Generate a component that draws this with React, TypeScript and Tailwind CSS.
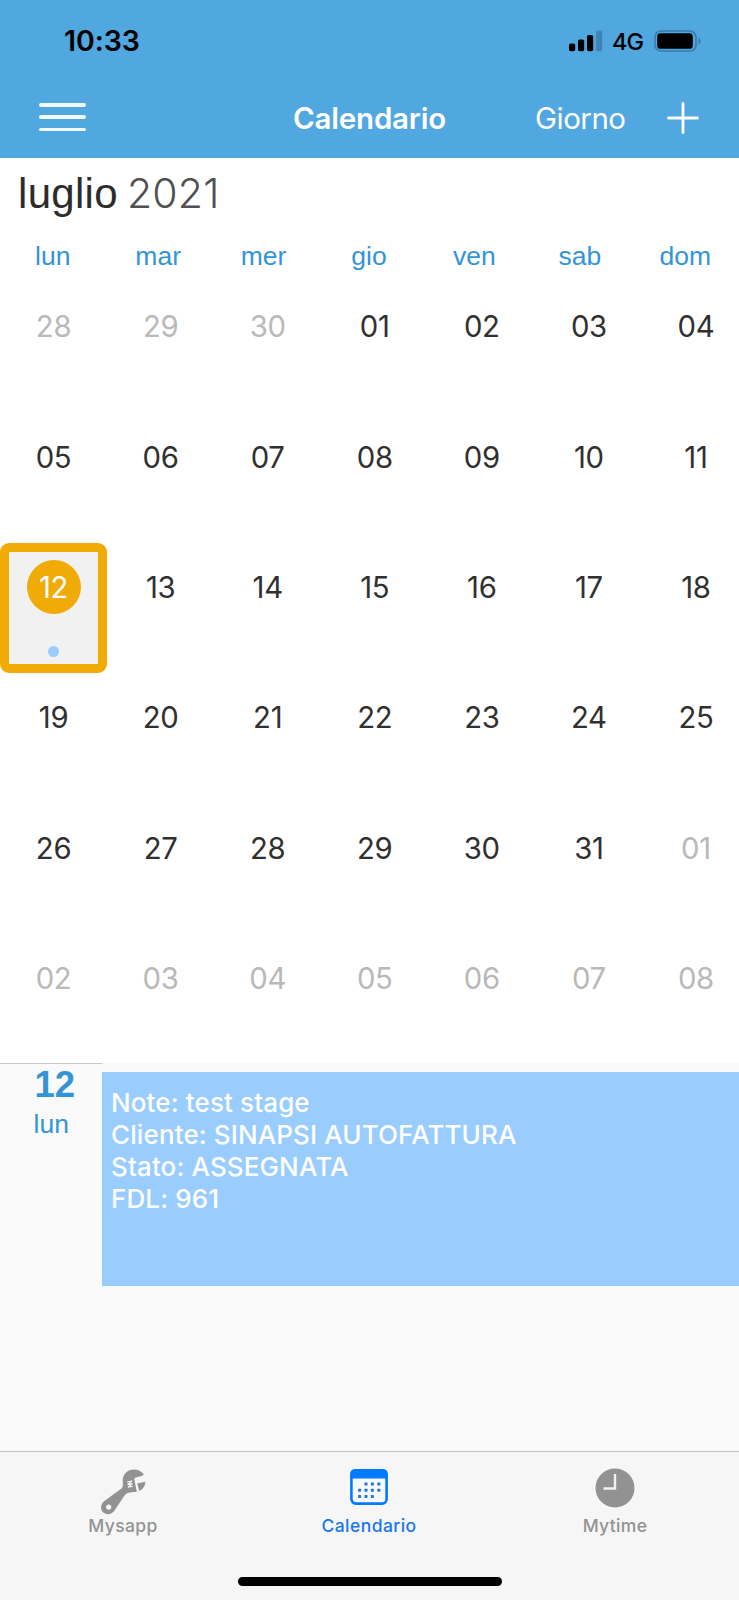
import React from "react";

const weekdays = ["lun", "mar", "mer", "gio", "ven", "sab", "dom"];

const weeks = [
  ["28", "29", "30", "01", "02", "03", "04"],
  ["05", "06", "07", "08", "09", "10", "11"],
  ["12", "13", "14", "15", "16", "17", "18"],
  ["19", "20", "21", "22", "23", "24", "25"],
  ["26", "27", "28", "29", "30", "31", "01"],
  ["02", "03", "04", "05", "06", "07", "08"],
];

const isOutside = (row: number, col: number) =>
  (row === 0 && col < 3) || (row === 4 && col === 6) || row === 5;

function StatusBar() {
  return (
    <div className="flex h-[82px] items-center justify-between pr-[37px] pl-[64px] text-black">
      <span className="text-[28.5px] leading-none font-semibold tracking-[-0.1px]">10:33</span>
      <div className="flex items-center">
        <svg width="34" height="22" viewBox="0 0 34 22">
          <rect x="0" y="13.5" width="6.2" height="7.7" rx="1.8" />
          <rect x="9" y="9.5" width="6.2" height="11.7" rx="1.8" />
          <rect x="18" y="5" width="6.2" height="16.2" rx="1.8" />
          <rect x="27" y="0.5" width="6.2" height="20.7" rx="1.8" fill="#3d84b5" />
        </svg>
        <span className="ml-[9px] w-[32px] pt-px text-[23.5px] leading-none font-medium tracking-[-0.8px]">4G</span>
        <svg className="ml-[10px]" width="48" height="22" viewBox="0 0 48 22">
          <rect x="1" y="1" width="41" height="20" rx="6" fill="none" stroke="#3a7ba8" strokeWidth="1.6" />
          <rect x="3.2" y="3.2" width="35.6" height="15.6" rx="3.4" />
          <path d="M44.5 7.4c2.6 1 2.6 6.2 0 7.2z" fill="#3a7ba8" />
        </svg>
      </div>
    </div>
  );
}

function NavBar() {
  return (
    <div className="grid h-[75.5px] grid-cols-[293px_242px_1fr] items-start text-[29.5px] leading-none text-white">
      <div className="flex flex-col gap-[8.5px] pt-[21px] pl-[39px]">
        <i className="h-[3.8px] w-[47px] rounded-full bg-[#f1faff]" />
        <i className="h-[3.8px] w-[47px] rounded-full bg-[#f1faff]" />
        <i className="h-[3.8px] w-[47px] rounded-full bg-[#f1faff]" />
      </div>
      <span className="pt-[22px] font-semibold tracking-[-0.2px]">Calendario</span>
      <div className="flex items-start">
        <span className="w-[132px] pt-[22px] tracking-[-0.5px]">Giorno</span>
        <svg className="mt-[20px]" width="32" height="32" viewBox="0 0 32 32">
          <path d="M1.5 16H30.5M16 1.5V30.5" stroke="#fff" strokeWidth="2.8" strokeLinecap="round" />
        </svg>
      </div>
    </div>
  );
}

function DayCell({ day, outside, selected }: { day: string; outside: boolean; selected: boolean }) {
  if (selected) {
    return (
      <div className="flex h-[130px] w-[107px] flex-col items-center rounded-[9px] border-[9px] border-[#f0ab06] bg-[#f1f1f1] pt-[8px]">
        <span className="flex size-[54px] items-center justify-center rounded-full bg-[#f0ab06] pt-px text-white">{day}</span>
        <i className="mt-[32px] size-[11px] rounded-full bg-[#99ccff]" />
      </div>
    );
  }
  return (
    <div className={outside ? "flex justify-center pt-[17px] text-[#b9b9b9]" : "flex justify-center pt-[17px] text-[#303030]"}>
      <span className="flex h-[54px] items-center pt-px">{day}</span>
    </div>
  );
}

function WrenchIcon() {
  return (
    <svg width="46" height="48" viewBox="0 0 46 48">
      <path
        fill="#929292"
        fillRule="evenodd"
        d="M42.8 5.3C39.5 .8 34 -.4 29.3 1.1C24 3 21.6 7.5 21.7 12C21.8 15 22.5 17.5 20.5 19.5L3 32.2C-.8 35.5-.8 41 2.5 43.6C6.5 46.6 11.5 45.2 13.8 41L23.5 26.5C26.5 22.6 31 23.6 35.8 22.8L33.2 9.8C36 6.8 40 9 42.8 5.3ZM7.7 35.5A2.600 2.600 0 1 1 7.700 40.700A2.600 2.600 0 1 1 7.700 35.500Z"
      />
      <path fill="#929292" d="M36.2 14.5L44.3 12.7C44.3 16.5 42 20.3 38.3 22Z" />
      <path
        d="M26 13L31 12M26.5 15.6L31.5 14.6M27 18.2L32 17.2M31 12L26.5 15.6M31.5 14.6L27 18.2"
        stroke="#f3f3f3"
        strokeWidth="1.1"
      />
    </svg>
  );
}

function CalendarIcon() {
  const dots = [
    [16, 15], [22.4, 15], [28.8, 15],
    [9.6, 21.2], [16, 21.2], [22.4, 21.2], [28.8, 21.2],
    [9.6, 27.4], [16, 27.4], [22.4, 27.4],
  ];
  return (
    <svg width="38" height="36" viewBox="0 0 38 36">
      <rect x="1.4" y="1.4" width="35.2" height="33.2" rx="4.5" fill="#f7f9fc" stroke="#007aff" strokeWidth="2.6" />
      <path d="M.2 9.4V5Q.2 .2 5 .2H33Q37.8 .2 37.8 5V9.4Z" fill="#007aff" />
      {dots.map(([x, y]) => (
        <rect key={x + "-" + y} x={x - 1.5} y={y - 1.5} width="3" height="3" rx=".6" fill="#2474d6" />
      ))}
    </svg>
  );
}

function ClockIcon() {
  return (
    <svg width="40" height="40" viewBox="0 0 40 40">
      <circle cx="20" cy="20" r="19.5" fill="#929292" />
      <path d="M20 6V20.5H8.5" fill="none" stroke="#f2f2f2" strokeWidth="2.4" />
    </svg>
  );
}

function TabBar() {
  return (
    <nav className="h-[149px] border-t border-[#bfc3c3] bg-[#f6f6f6]">
      <div className="grid h-[125px] w-[738px] grid-cols-3 text-[17.5px] leading-none font-medium text-[#929292]">
        <div className="flex flex-col items-center">
          <div className="h-[65px] pt-[17px] pl-px"><WrenchIcon /></div>
          <span className="tracking-[0.35px]">Mysapp</span>
        </div>
        <div className="flex flex-col items-center text-[#1677ee]">
          <div className="h-[65px] pt-[17px]"><CalendarIcon /></div>
          <span className="tracking-[0.45px]">Calendario</span>
        </div>
        <div className="flex flex-col items-center">
          <div className="h-[65px] pt-[16px]"><ClockIcon /></div>
          <span className="tracking-[0.35px]">Mytime</span>
        </div>
      </div>
      <div className="mx-auto h-[9px] w-[264px] rounded-full bg-black" />
    </nav>
  );
}

export default function App() {
  return (
    <div className="flex h-[1600px] w-[739px] flex-col overflow-hidden bg-white font-['Inter',sans-serif]">
      <header className="h-[157.5px] shrink-0 bg-[#51a7e0]">
        <StatusBar />
        <NavBar />
      </header>

      <section className="h-[905.5px] shrink-0">
        <h1 className="flex h-[76px] items-start pt-[13px] pl-[18px] font-['Liberation_Sans',sans-serif] text-[42px] leading-[46px] text-[#2c2c2c]">
          <span className="tracking-[0.3px]">luglio</span>
          <span className="ml-[9px] font-['Inter',sans-serif] text-[41px] leading-[45px] font-light tracking-[0.2px] text-[#505050]">2021</span>
        </h1>
        <div className="grid h-[49px] w-[738px] grid-cols-7 text-center font-['Liberation_Sans',sans-serif] text-[26.5px] leading-[44px] text-[#3494d8]">
          {weekdays.map((d) => (
            <span key={d}>{d}</span>
          ))}
        </div>
        <div className="grid w-[749.5px] auto-rows-[130.3px] grid-cols-7 text-[29.3px] leading-none tracking-[-0.3px]">
          {weeks.map((week, r) =>
            week.map((day, c) => (
              <DayCell key={r + "-" + c} day={day} outside={isOutside(r, c)} selected={r === 2 && c === 0} />
            ))
          )}
        </div>
      </section>

      <section className="flex grow bg-[#fafafa]">
        <div className="w-[102px] border-t border-[#c8c8c8] font-['Liberation_Sans',sans-serif] text-[#3494d8]">
          <div className="pl-[34.500px] text-[36.500px] leading-[42px] font-bold">12</div>
          <div className="pl-[33.500px] text-[26.5px] leading-[37px]">lun</div>
        </div>
        <div className="mt-[9px] h-[214px] grow bg-[#99ccff] pt-[15px] pl-[9px] text-[26px] leading-[32px] font-medium tracking-[0.12px] text-white">
          <p>Note: test stage</p>
          <p>Cliente: SINAPSI AUTOFATTURA</p>
          <p>Stato: ASSEGNATA</p>
          <p>FDL: 961</p>
        </div>
      </section>

      <TabBar />
    </div>
  );
}
